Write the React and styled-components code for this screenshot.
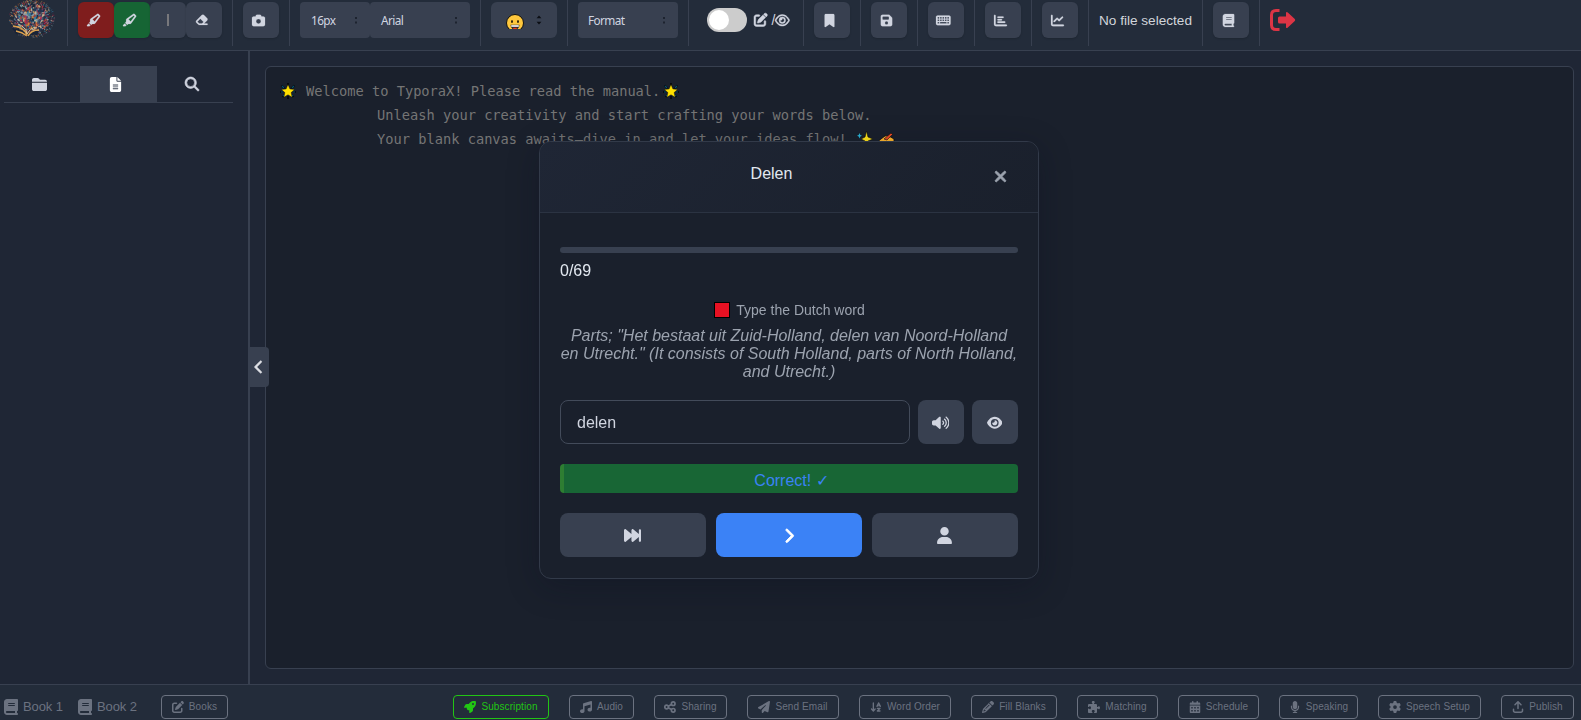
import React from "react";
import styled, { createGlobalStyle, css } from "styled-components";
import {
  FaHighlighter,
  FaEraser,
  FaCamera,
  FaBookmark,
  FaFloppyDisk,
  FaKeyboard,
  FaFolderClosed,
  FaFileLines,
  FaMagnifyingGlass,
  FaPenToSquare,
  FaRegEye,
  FaEye,
  FaChartBar,
  FaChartLine,
  FaBook,
  FaRocket,
  FaMusic,
  FaPaperPlane,
  FaArrowDownAZ,
  FaPencil,
  FaPuzzlePiece,
  FaCalendarDays,
  FaMicrophone,
  FaGear,
  FaArrowUpFromBracket,
  FaVolumeHigh,
  FaForwardFast,
  FaChevronRight,
  FaChevronLeft,
  FaUser,
  FaXmark,
} from "react-icons/fa6";

const GlobalStyle = createGlobalStyle`
  *, *::before, *::after { box-sizing: border-box; }
  body {
    margin: 0;
    background: #1f2635;
    color: #d1d5db;
    font-family: "Liberation Sans", Arial, sans-serif;
    overflow: hidden;
  }
  svg { display: block; flex: none; }
  button, input { font-family: inherit; }
`;

const Page = styled.div`
  display: flex;
  flex-direction: column;
  width: 100vw;
  height: 100vh;
  overflow: hidden;
`;

const Toolbar = styled.header`
  display: flex;
  align-items: flex-start;
  flex: none;
  height: 51px;
  background: #232c3a;
  border-bottom: 1px solid #384050;
`;

const Group = styled.div`
  display: flex;
  align-items: center;
  height: 46px;
  padding: 0 ${(p) => p.$padRight ?? 10}px 6px ${(p) => p.$padLeft ?? 10}px;
  border-right: ${(p) => (p.$last ? "0" : "1px solid #384050")};
  ${(p) => p.$width && css`width: ${p.$width}px;`}
`;

const ToolButton = styled.button`
  display: flex;
  align-items: center;
  justify-content: center;
  width: 36px;
  height: 36px;
  padding: 0 ${(p) => p.$shift ?? 5}px 0 0;
  border: 0;
  border-radius: 6px;
  background: ${(p) => p.$bg ?? "#384050"};
  color: #d1d5e0;
  box-shadow: 0 1px 2px rgba(0, 0, 0, 0.15);

  svg { stroke-width: 8px; overflow: visible; }
`;

const Bar = styled.span`
  width: 2px;
  height: 12px;
  background: #78787c;
`;

const Select = styled.div`
  display: flex;
  align-items: center;
  justify-content: space-between;
  width: ${(p) => p.$width}px;
  height: 36px;
  padding: 0 ${(p) => p.$padRight ?? 11}px 0 ${(p) => p.$padLeft ?? 11}px;
  border-radius: ${(p) => p.$radius ?? 4}px;
  background: #384050;
  color: #d1d5e0;
  font-family: "Noto Sans", "Open Sans", sans-serif;
  font-size: 11.8px;
  letter-spacing: -0.6px;
`;

const EmojiSlot = styled.span`
  display: flex;
  padding: 8px 0 0 3px;
`;

const Toggle = styled.span`
  display: flex;
  align-items: center;
  flex: none;
  width: 40px;
  height: 24px;
  padding: 2px;
  border-radius: 12px;
  background: #ccc;
`;

const Knob = styled.span`
  width: 20px;
  height: 20px;
  border-radius: 50%;
  background: #fff;
`;

const ModeIcons = styled.span`
  display: flex;
  align-items: center;
  margin-left: 7px;
  font-size: 14px;
  color: #d1d5e0;

  svg { stroke-width: 18px; overflow: visible; }
`;

const Slash = styled.span`
  margin-left: 4px;
`;

const FileName = styled.span`
  width: 93px;
  font-size: 13.6px;
  white-space: nowrap;
`;

const Main = styled.div`
  display: flex;
  flex: 1;
  min-height: 0;
`;

const Sidebar = styled.aside`
  position: relative;
  flex: none;
  width: 250px;
  padding: 15px 15px 0 4px;
  border-right: 2px solid #384050;
`;

const Tabs = styled.nav`
  display: grid;
  grid-template-columns: repeat(3, 1fr);
  height: 37px;
  border-bottom: 1px solid #384050;
`;

const Tab = styled.div`
  display: flex;
  align-items: center;
  justify-content: center;
  padding-right: ${(p) => (p.$active ? 5 : 6)}px;
  font-size: 15px;
  color: ${(p) => (p.$active ? "#fff" : "#d1d5e0")};
  background: ${(p) => (p.$active ? "#384050" : "transparent")};
`;

const BoldIcon = styled.span`
  display: flex;

  svg { stroke-width: ${(p) => p.$weight ?? 24}px; overflow: visible; }
`;

const Collapse = styled.button`
  position: absolute;
  top: 296px;
  right: -21px;
  z-index: 1;
  display: flex;
  align-items: center;
  justify-content: center;
  width: 20px;
  height: 40px;
  padding: 0;
  border: 0;
  border-radius: 0 4px 4px 0;
  background: #384050;
  color: #e5e7eb;
  font-size: 14px;
`;

const Editor = styled.main`
  flex: 1;
  margin: 15px 7px 15px 15px;
  padding: 12px;
  border: 1px solid #384050;
  border-radius: 6px;
  background: #1a202c;
  color: #757575;
  font-family: "DejaVu Sans Mono", monospace;
  font-size: 13.7px;
`;

const Line = styled.div`
  display: flex;
  align-items: center;
  height: 24px;
  padding-left: ${(p) => (p.$indent ? 99 : 2)}px;
  white-space: pre;
`;

const FirstText = styled.span`
  margin: 0 3px 0 10px;
`;

const EmojiPair = styled.span`
  display: flex;
  gap: 6px;
  margin-left: 2px;
`;

const Footer = styled.footer`
  display: flex;
  align-items: flex-start;
  justify-content: space-between;
  flex: none;
  height: 36px;
  padding: 10px 7px 0 3px;
  border-top: 1px solid #384050;
  background: #232c3a;
`;

const FooterSide = styled.div`
  display: flex;
  align-items: center;
  gap: ${(p) => p.$gap}px;
`;

const BookLink = styled.span`
  display: flex;
  align-items: center;
  gap: 4px;
  width: ${(p) => p.$width}px;
  padding-bottom: 1px;
  color: #6b7280;
  font-size: 13px;
  letter-spacing: -0.1px;
  white-space: nowrap;
`;

const FooterButton = styled.button`
  display: flex;
  align-items: center;
  justify-content: center;
  gap: 5px;
  width: ${(p) => p.$width}px;
  height: 24px;
  padding: 0 0 1px;
  border: 1px solid ${(p) => (p.$accent ? "#22c514" : "#6b7280")};
  border-radius: 4px;
  background: transparent;
  color: ${(p) => (p.$accent ? "#22c514" : "#6b7280")};
  font-size: 10px;
  letter-spacing: 0.1px;
  white-space: nowrap;

  svg { font-size: 12px; }
`;

const Overlay = styled.div`
  position: fixed;
  inset: 0;
  z-index: 5;
  display: flex;
  align-items: center;
  justify-content: center;
  padding-right: 3px;
`;

const Dialog = styled.section`
  display: flex;
  flex-direction: column;
  width: 500px;
  height: 438px;
  overflow: hidden;
  border: 1px solid #323a49;
  border-radius: 12px;
  background: #1a202c;
  box-shadow: 0 8px 32px rgba(10, 12, 30, 0.3);
`;

const DialogHeader = styled.div`
  display: flex;
  justify-content: space-between;
  height: 71px;
  padding: 20px 31px 0 20px;
  border-bottom: 1px solid #2b3342;
  background: linear-gradient(135deg, #1f2635, #1a202c);
`;

const Title = styled.h2`
  flex: 1;
  margin: 3px 0 0;
  padding-right: 10px;
  color: #e2e8f0;
  font-size: 16px;
  font-weight: 400;
  line-height: 18px;
  text-align: center;
`;

const Close = styled.button`
  display: flex;
  justify-content: center;
  width: 14px;
  height: 30px;
  padding: 6px 0 0;
  border: 0;
  background: transparent;
  color: #9ca3af;
  font-size: 17px;
`;

const Body = styled.div`
  display: flex;
  flex-direction: column;
  padding: 34.4px 20px 0;
`;

const Progress = styled.div`
  height: 6px;
  border-radius: 3px;
  background: #384050;
`;

const Count = styled.div`
  margin-top: 8.6px;
  color: #e2e8f0;
  font-size: 16px;
  line-height: 18px;
`;

const Prompt = styled.div`
  display: flex;
  align-items: center;
  justify-content: center;
  gap: 6px;
  height: 18px;
  margin-top: 21px;
  padding-left: 1px;
  color: #9ca3af;
  font-size: 14px;
`;

const RedSquare = styled.span`
  width: 16px;
  height: 16px;
  border: 1px solid #000;
  background: #e81123;
`;

const Hint = styled.p`
  margin: 8px -4px 0;
  color: #9ca3af;
  font-size: 16px;
  font-style: italic;
  line-height: 18px;
  text-align: center;
`;

const AnswerRow = styled.div`
  display: grid;
  grid-template-columns: 1fr 46px 46px;
  gap: 8px;
  height: 44px;
  margin-top: 19.5px;
`;

const Answer = styled.input`
  min-width: 0;
  padding: 1px 16px 0;
  border: 1px solid #434b5a;
  border-radius: 8px;
  outline: 0;
  background: #1a202c;
  color: #d1d5e0;
  font-size: 16px;
`;

const Feedback = styled.div`
  display: flex;
  align-items: center;
  justify-content: center;
  height: 29px;
  margin: 20px 0;
  padding: 3px 0 0 1px;
  border-left: 4px solid #2e7d32;
  border-radius: 4px;
  background: #186635;
  color: #3b82f6;
  font-size: 16px;
`;

const Actions = styled.div`
  display: grid;
  grid-template-columns: repeat(3, 1fr);
  gap: 10px;
  height: 44px;
`;

const Action = styled.button`
  display: flex;
  align-items: center;
  justify-content: center;
  padding: 0 1px 0 0;
  border: 0;
  border-radius: 8px;
  background: ${(p) => (p.$primary ? "#3b82f6" : "#384050")};
  color: ${(p) => (p.$primary ? "#fff" : "#d1d5e0")};
  font-size: 17px;
`;

const logoColors = ["#b4532f", "#d98e3c", "#2f7ea3", "#b3264a", "#45536b", "#89a0a8", "#1b3a5c", "#7c3b58", "#1a2233", "#c9b79a"];

function Logo() {
  let seed = 11;
  const rnd = () => {
    seed = (seed * 16807) % 2147483647;
    return seed / 2147483647;
  };
  const strokes = Array.from({ length: 760 }, (_, i) => {
    const angle = rnd() * Math.PI * 2;
    const radius = Math.pow(rnd(), 0.55);
    const x = 23 + Math.cos(angle) * radius * 22;
    const y = 19 + Math.sin(angle) * radius * 18.5;
    const len = 1 + rnd() * 3.5 * (1 - radius * 0.75);
    const dir = Math.atan2(y - 34, x - 20) + (rnd() - 0.5) * 1.6;
    return (
      <line
        key={i}
        x1={x}
        y1={y}
        x2={x + Math.cos(dir) * len}
        y2={y + Math.sin(dir) * len}
        stroke={logoColors[Math.floor(rnd() * logoColors.length)]}
        strokeWidth={0.7 + (1 - radius) * 1.5}
        opacity={radius > 0.8 ? 0.6 : 0.9}
      />
    );
  });
  return (
    <svg width="48" height="40" viewBox="0 0 48 40">
      <ellipse cx="23" cy="20" rx="16" ry="13" fill="#283247" />
      {strokes}
      <path d="M3 28q10 0 15 7 5-6 12-4l-2 4q-5-1-9 2-6-3-12-3z" fill="#172337" />
      <path d="M4 26q11 1 14 9M7 31q6 1 11 5M30 30q-8 0-11 6" fill="none" stroke="#dba04f" strokeWidth="1.500" />
      <path d="M9 24q8 3 9 10 3-6 8-7" fill="none" stroke="#e5c08a" strokeWidth="1" />
    </svg>
  );
}

const Arrows = ({ strong }) =>
  strong ? (
    <svg width="6" height="10" viewBox="0 0 6 10" fill="#0b0e14">
      <path d="M.6 3.200 3 .6l2.400 2.600zM.6 6.800h4.800L3 9.400z" />
    </svg>
  ) : (
    <svg width="5" height="7" viewBox="0 0 5 7" fill="#1d232f">
      <path d="M1 0h2v2H1zM1 4.500h2v2H1z" />
    </svg>
  );

const Grin = () => (
  <svg width="20" height="20" viewBox="0 0 20 20">
    <clipPath id="grin"><path d="M0 0h20v15H0z" /></clipPath>
    <g clipPath="url(#grin)">
      <circle cx="10" cy="9" r="8.500" fill="#ffc83d" stroke="#111" strokeWidth="1" />
      <ellipse cx="7" cy="7.500" rx=".8" ry="1.500" />
      <ellipse cx="13" cy="7.500" rx=".8" ry="1.500" />
      <path d="M5.500 10.800h9q0 4.700-4.500 4.700t-4.500-4.700z" fill="#26262b" />
      <path d="M6.200 11.200h7.600v1.600H6.200z" fill="#fff" />
      <path d="M8.200 13.800h3.600V16H8.200z" fill="#f03a17" />
    </g>
  </svg>
);

const Star = () => (
  <svg width="16" height="16" viewBox="0 0 16 16">
    <path d="M8 0v3M1.500 2.500l3 3M14.500 2.500l-3 3M0 9h3M16 9h-3M2.500 14l2-2M13.500 14l-2-2M8 16v-3" stroke="#080b10" strokeWidth="2" />
    <path d="M2 3l2 2M14 3l-2 2M1 9h2M15 9h-2M3 13l1-1M13 13l-1-1" stroke="#06506c" strokeWidth="1.200" />
    <path d="m8 1.500 1.900 4.400 4.700.5-3.500 3.200 1.100 4.700L8 11.800l-4.200 2.500 1.100-4.700-3.500-3.200 4.700-.5z" fill="#ffe000" stroke="#080b10" strokeWidth=".4" />
  </svg>
);

const Sparkles = () => (
  <svg width="16" height="16" viewBox="0 0 16 16">
    <path d="M9.500 0 11 6l5 2-5 2-1.500 6L8 10 4 8l4-2z" fill="#ffe21a" stroke="#080b10" strokeWidth=".6" />
    <path d="m2.500 2 .8 2 1.700.8-1.700.8-.8 2-.8-2L0 4.800 1.700 4z" fill="#2bb5d8" />
  </svg>
);

const Writing = () => (
  <svg width="16" height="16" viewBox="0 0 16 16">
    <path d="M0 9.500 6 5l3-.5L15 8v6H3z" fill="#ffb52e" stroke="#080b10" strokeWidth=".8" />
    <path d="m5 8 7-6 1.500 1.500L8 9z" fill="#e74a25" stroke="#080b10" strokeWidth=".6" />
  </svg>
);

const Exit = () => (
  <svg width="26" height="22" viewBox="0 0 26 22">
    <path d="M9.500 1.500H6Q1.500 1.500 1.500 6v10q0 4.500 4.500 4.500h3.500" fill="none" stroke="#dc3545" strokeWidth="3" />
    <path d="M9.500 7.500H16V3.400q.8-1 1.800 0l7 6.700q.8.900 0 1.800l-7 6.700q-1 1-1.800 0v-4.100H9.500q-1.500 0-1.500-1.500V9q0-1.500 1.500-1.500z" fill="#dc3545" />
  </svg>
);

const ShareNodes = () => (
  <svg width="12" height="12" viewBox="0 0 12 12" fill="none" stroke="currentColor" strokeWidth="1.700">
    <circle cx="2.600" cy="6" r="1.800" />
    <circle cx="9.200" cy="2.700" r="1.800" />
    <circle cx="9.200" cy="9.300" r="1.800" />
    <path d="m4.200 5.200 3.300-1.700M4.200 6.800l3.300 1.700" />
  </svg>
);

const footerItems = [
  ["Subscription", FaRocket, 96],
  ["Audio", FaMusic, 65],
  ["Sharing", ShareNodes, 73],
  ["Send Email", FaPaperPlane, 92],
  ["Word Order", FaArrowDownAZ, 92],
  ["Fill Blanks", FaPencil, 86],
  ["Matching", FaPuzzlePiece, 81],
  ["Schedule", FaCalendarDays, 81],
  ["Speaking", FaMicrophone, 79],
  ["Speech Setup", FaGear, 103],
  ["Publish", FaArrowUpFromBracket, 73],
];

const singleTools = [
  [FaBookmark, 13],
  [FaFloppyDisk, 13],
  [FaKeyboard, 14.6],
  [FaChartBar, 13],
  [FaChartLine, 13],
];

export default function App() {
  return (
    <Page>
      <GlobalStyle />
      <Toolbar>
        <Group $width={68} $padLeft={9}><Logo /></Group>
        <Group>
          <ToolButton $bg="#7f1d1d"><FaHighlighter size={14} /></ToolButton>
          <ToolButton $bg="#166534"><FaHighlighter size={14} /></ToolButton>
          <ToolButton $shift={0}><Bar /></ToolButton>
          <ToolButton><FaEraser size={13.500} /></ToolButton>
        </Group>
        <Group><ToolButton><FaCamera size={13} /></ToolButton></Group>
        <Group>
          <Select $width={70}>16px<Arrows /></Select>
          <Select $width={100}>Arial<Arrows /></Select>
        </Group>
        <Group>
          <Select $width={66} $radius={6} $padRight={15}>
            <EmojiSlot><Grin /></EmojiSlot>
            <Arrows strong />
          </Select>
        </Group>
        <Group><Select $width={100} $padLeft={10}>Format<Arrows /></Select></Group>
        <Group $width={115} $padLeft={18} $padRight={0}>
          <Toggle><Knob /></Toggle>
          <ModeIcons><FaPenToSquare size={13.500} /><Slash>/</Slash><FaRegEye size={14.600} /></ModeIcons>
        </Group>
        {singleTools.map(([Icon, size], i) => (
          <Group key={i}><ToolButton><Icon size={size} /></ToolButton></Group>
        ))}
        <Group><FileName>No file selected</FileName></Group>
        <Group><ToolButton><FaBook size={13} /></ToolButton></Group>
        <Group $last><Exit /></Group>
      </Toolbar>

      <Main>
        <Sidebar>
          <Tabs>
            <Tab><FaFolderClosed /></Tab>
            <Tab $active><FaFileLines /></Tab>
            <Tab><BoldIcon><FaMagnifyingGlass size={14} /></BoldIcon></Tab>
          </Tabs>
          <Collapse><BoldIcon><FaChevronLeft /></BoldIcon></Collapse>
        </Sidebar>
        <Editor>
          <Line><Star /><FirstText>Welcome to TyporaX! Please read the manual.</FirstText><Star /></Line>
          <Line $indent>Unleash your creativity and start crafting your words below.</Line>
          <Line $indent>Your blank canvas awaits—dive in and let your ideas flow! <EmojiPair><Sparkles /><Writing /></EmojiPair></Line>
        </Editor>
      </Main>

      <Footer>
        <FooterSide $gap={0}>
          <BookLink $width={74}><FaBook size={16} />Book 1</BookLink>
          <BookLink $width={84}><FaBook size={16} />Book 2</BookLink>
          <FooterButton $width={67}><FaPenToSquare />Books</FooterButton>
        </FooterSide>
        <FooterSide $gap={20}>
          {footerItems.map(([label, Icon, width]) => (
            <FooterButton key={label} $width={width} $accent={label === "Subscription"}>
              <Icon />{label}
            </FooterButton>
          ))}
        </FooterSide>
      </Footer>

      <Overlay>
        <Dialog>
          <DialogHeader>
            <Title>Delen</Title>
            <Close><BoldIcon><FaXmark /></BoldIcon></Close>
          </DialogHeader>
          <Body>
            <Progress />
            <Count>0/69</Count>
            <Prompt><RedSquare />Type the Dutch word</Prompt>
            <Hint>
              Parts; "Het bestaat uit Zuid-Holland, delen van Noord-Holland<br />
              en Utrecht." (It consists of South Holland, parts of North Holland,<br />
              and Utrecht.)
            </Hint>
            <AnswerRow>
              <Answer defaultValue="delen" />
              <Action><FaVolumeHigh size={17.500} /></Action>
              <Action><FaEye size={15.500} /></Action>
            </AnswerRow>
            <Feedback>Correct! ✓</Feedback>
            <Actions>
              <Action><FaForwardFast /></Action>
              <Action $primary><BoldIcon $weight={30}><FaChevronRight size={15.500} /></BoldIcon></Action>
              <Action><FaUser /></Action>
            </Actions>
          </Body>
        </Dialog>
      </Overlay>
    </Page>
  );
}
